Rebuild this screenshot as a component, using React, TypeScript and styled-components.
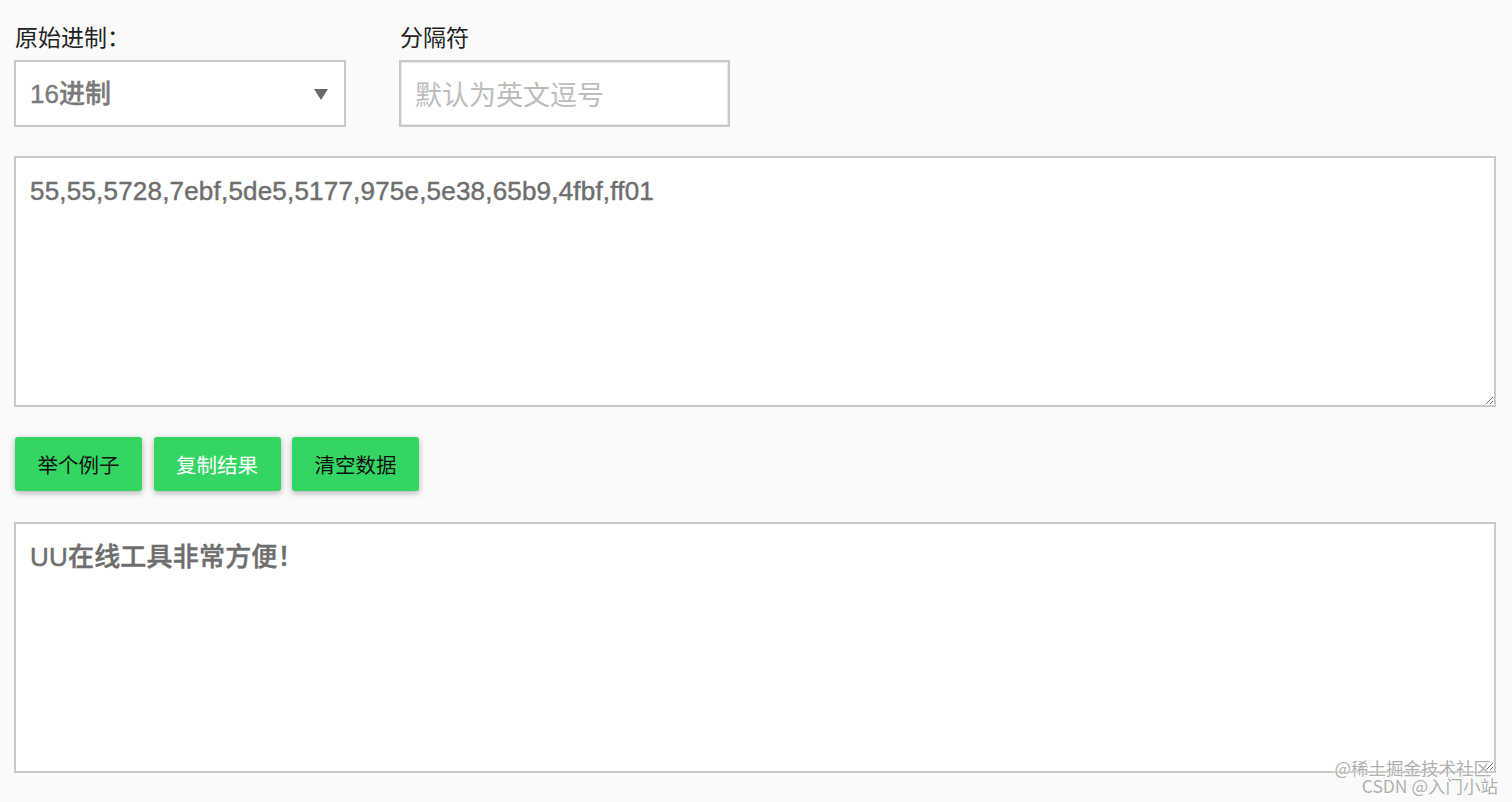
import React from "react";
import styled, { createGlobalStyle } from "styled-components";

const Global = createGlobalStyle`
  html, body { margin: 0; padding: 0; background: #fafafa; }
  body { font-family: "Noto Sans CJK SC", "Noto Sans", "Liberation Sans", sans-serif; }
  * { box-sizing: border-box; }
`;

const Page = styled.div`
  position: relative;
  width: 1512px;
  height: 802px;
  padding: 20px 16px 0 14px;
  overflow: hidden;
`;

const TopRow = styled.div`
  display: flex;
  gap: 53px;
  align-items: flex-start;
`;

const Field = styled.div`
  display: flex;
  flex-direction: column;
  gap: 8px;
`;

const Label = styled.label`
  font-size: 23px;
  line-height: 32px;
  color: #222;
  padding-left: 1px;
`;

const SelectWrap = styled.div`
  position: relative;
  width: 332px;
  height: 67px;
`;

const Select = styled.select`
  appearance: none;
  width: 100%;
  height: 100%;
  border: 2px solid #c8c8c8;
  background: #fff;
  padding: 0 40px 0 14px;
  font-family: "Liberation Sans", "Noto Sans CJK SC", sans-serif;
  font-size: 26px;
  font-weight: 500;
  -webkit-text-stroke: 0.4px #7a7a7a;
  color: #7a7a7a;
  outline: none;
`;

const Arrow = styled.span`
  position: absolute;
  right: 18px;
  top: 29px;
  width: 0;
  height: 0;
  border-left: 7px solid transparent;
  border-right: 7px solid transparent;
  border-top: 11px solid #6a6a6a;
  pointer-events: none;
`;

const Input = styled.input`
  width: 331px;
  height: 67px;
  border: 2px solid #c8c8c8;
  box-shadow: inset 1px 1px 0 #e8e8e8, inset -1px -1px 0 #e8e8e8;
  background: #fff;
  padding: 0 14px;
  font-size: 27px;
  font-family: "Noto Sans CJK SC", sans-serif;
  color: #777;
  outline: none;
  &::placeholder { color: #bdbdbd; }
`;

const Area = styled.textarea<{ $top: number }>`
  display: block;
  width: 1482px;
  height: 251px;
  margin-top: ${(p) => p.$top}px;
  border: 2px solid #c8c8c8;
  background: #fff;
  padding: 16px 14px;
  font-family: "Liberation Sans", "Noto Sans CJK SC", sans-serif;
  font-size: 26px;
  font-weight: 500;
  letter-spacing: 0.2px;
  -webkit-text-stroke: 0.45px #6e6e6e;
  line-height: 34px;
  color: #6e6e6e;
  outline: none;
`;

const Buttons = styled.div`
  display: flex;
  gap: 11.5px;
  margin-top: 30px;
  padding-left: 1px;
`;

const Button = styled.button<{ $light?: boolean }>`
  width: 127px;
  height: 54px;
  border: none;
  border-radius: 3px;
  background: #34d663;
  color: ${(p) => (p.$light ? "#ffffff" : "#111111")};
  font-family: "Noto Sans CJK SC", sans-serif;
  font-size: 20.5px;
  box-shadow: 0 2px 6px rgba(0, 0, 0, 0.3);
  cursor: pointer;
`;

const Watermark = styled.div`
  position: absolute;
  right: 14px;
  bottom: 7px;
  display: flex;
  flex-direction: column;
  align-items: flex-end;
  font-family: "Noto Sans CJK SC", sans-serif;
  font-size: 17.5px;
  line-height: 18px;
  color: #b0b0b0;
  text-shadow: 0 0 2px #fff, 0 0 2px #fff;
  pointer-events: none;
`;

const WLine = styled.span<{ $shift?: number }>`
  margin-right: ${(p) => p.$shift ?? 0}px;
`;

export default function App() {
  return (
    <Page>
      <Global />
      <TopRow>
        <Field>
          <Label>原始进制：</Label>
          <SelectWrap>
            <Select defaultValue="16">
              <option value="16">16进制</option>
              <option value="10">10进制</option>
            </Select>
            <Arrow />
          </SelectWrap>
        </Field>
        <Field>
          <Label>分隔符</Label>
          <Input placeholder="默认为英文逗号" />
        </Field>
      </TopRow>
      <Area $top={29} defaultValue="55,55,5728,7ebf,5de5,5177,975e,5e38,65b9,4fbf,ff01" />
      <Buttons>
        <Button>举个例子</Button>
        <Button $light>复制结果</Button>
        <Button>清空数据</Button>
      </Buttons>
      <Area $top={31} defaultValue="UU在线工具非常方便！" />
      <Watermark>
        <WLine $shift={7}>@稀土掘金技术社区</WLine>
        <WLine>CSDN @入门小站</WLine>
      </Watermark>
    </Page>
  );
}
